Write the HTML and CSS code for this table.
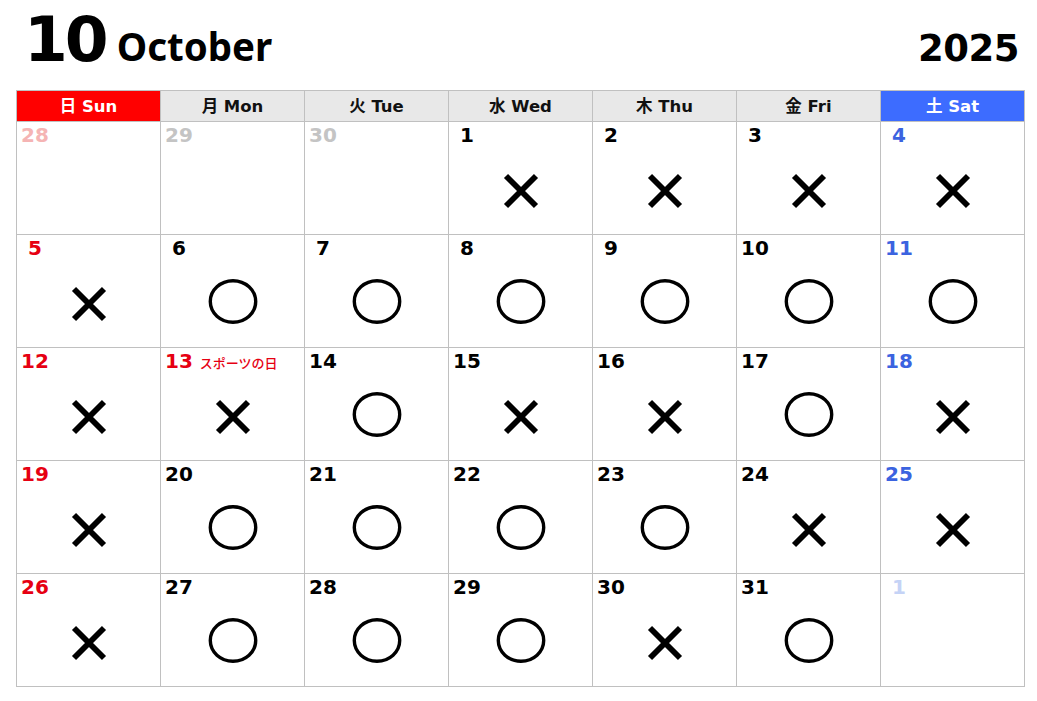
FILE: index.html
```html
<!DOCTYPE html>
<html lang="ja">
<head>
<meta charset="utf-8">
<title>October 2025</title>
<link rel="stylesheet" href="styles.css">
</head>
<body>
<div class="page">
  <div class="title">
    <span class="month-num">10</span>
    <span class="month-name">October</span>
    <span class="year">2025</span>
  </div>
  <div class="cal">
    <div class="hd sun">日 Sun</div>
    <div class="hd">月 Mon</div>
    <div class="hd">火 Tue</div>
    <div class="hd">水 Wed</div>
    <div class="hd">木 Thu</div>
    <div class="hd">金 Fri</div>
    <div class="hd sat">土 Sat</div>

    <div class="day"><div class="num prev-sun">28</div></div>
    <div class="day"><div class="num prev">29</div></div>
    <div class="day"><div class="num prev">30</div></div>
    <div class="day"><div class="num s">1</div><svg class="mark" viewBox="0 0 50 50"><path d="M10 10L40 40M40 10L10 40"/></svg></div>
    <div class="day"><div class="num s">2</div><svg class="mark" viewBox="0 0 50 50"><path d="M10 10L40 40M40 10L10 40"/></svg></div>
    <div class="day"><div class="num s">3</div><svg class="mark" viewBox="0 0 50 50"><path d="M10 10L40 40M40 10L10 40"/></svg></div>
    <div class="day"><div class="num s blue">4</div><svg class="mark" viewBox="0 0 50 50"><path d="M10 10L40 40M40 10L10 40"/></svg></div>

    <div class="day"><div class="num s red">5</div><svg class="mark" viewBox="0 0 50 50"><path d="M10 10L40 40M40 10L10 40"/></svg></div>
    <div class="day"><div class="num s">6</div><svg class="mark" viewBox="0 0 50 50"><ellipse cx="25" cy="22.5" rx="22.7" ry="20.7"/></svg></div>
    <div class="day"><div class="num s">7</div><svg class="mark" viewBox="0 0 50 50"><ellipse cx="25" cy="22.5" rx="22.7" ry="20.7"/></svg></div>
    <div class="day"><div class="num s">8</div><svg class="mark" viewBox="0 0 50 50"><ellipse cx="25" cy="22.5" rx="22.7" ry="20.7"/></svg></div>
    <div class="day"><div class="num s">9</div><svg class="mark" viewBox="0 0 50 50"><ellipse cx="25" cy="22.5" rx="22.7" ry="20.7"/></svg></div>
    <div class="day"><div class="num">10</div><svg class="mark" viewBox="0 0 50 50"><ellipse cx="25" cy="22.5" rx="22.7" ry="20.7"/></svg></div>
    <div class="day"><div class="num blue">11</div><svg class="mark" viewBox="0 0 50 50"><ellipse cx="25" cy="22.5" rx="22.7" ry="20.7"/></svg></div>

    <div class="day"><div class="num red">12</div><svg class="mark" viewBox="0 0 50 50"><path d="M10 10L40 40M40 10L10 40"/></svg></div>
    <div class="day"><div class="num red">13<span class="holiday">スポーツの日</span></div><svg class="mark" viewBox="0 0 50 50"><path d="M10 10L40 40M40 10L10 40"/></svg></div>
    <div class="day"><div class="num">14</div><svg class="mark" viewBox="0 0 50 50"><ellipse cx="25" cy="22.5" rx="22.7" ry="20.7"/></svg></div>
    <div class="day"><div class="num">15</div><svg class="mark" viewBox="0 0 50 50"><path d="M10 10L40 40M40 10L10 40"/></svg></div>
    <div class="day"><div class="num">16</div><svg class="mark" viewBox="0 0 50 50"><path d="M10 10L40 40M40 10L10 40"/></svg></div>
    <div class="day"><div class="num">17</div><svg class="mark" viewBox="0 0 50 50"><ellipse cx="25" cy="22.5" rx="22.7" ry="20.7"/></svg></div>
    <div class="day"><div class="num blue">18</div><svg class="mark" viewBox="0 0 50 50"><path d="M10 10L40 40M40 10L10 40"/></svg></div>

    <div class="day"><div class="num red">19</div><svg class="mark" viewBox="0 0 50 50"><path d="M10 10L40 40M40 10L10 40"/></svg></div>
    <div class="day"><div class="num">20</div><svg class="mark" viewBox="0 0 50 50"><ellipse cx="25" cy="22.5" rx="22.7" ry="20.7"/></svg></div>
    <div class="day"><div class="num">21</div><svg class="mark" viewBox="0 0 50 50"><ellipse cx="25" cy="22.5" rx="22.7" ry="20.7"/></svg></div>
    <div class="day"><div class="num">22</div><svg class="mark" viewBox="0 0 50 50"><ellipse cx="25" cy="22.5" rx="22.7" ry="20.7"/></svg></div>
    <div class="day"><div class="num">23</div><svg class="mark" viewBox="0 0 50 50"><ellipse cx="25" cy="22.5" rx="22.7" ry="20.7"/></svg></div>
    <div class="day"><div class="num">24</div><svg class="mark" viewBox="0 0 50 50"><path d="M10 10L40 40M40 10L10 40"/></svg></div>
    <div class="day"><div class="num blue">25</div><svg class="mark" viewBox="0 0 50 50"><path d="M10 10L40 40M40 10L10 40"/></svg></div>

    <div class="day"><div class="num red">26</div><svg class="mark" viewBox="0 0 50 50"><path d="M10 10L40 40M40 10L10 40"/></svg></div>
    <div class="day"><div class="num">27</div><svg class="mark" viewBox="0 0 50 50"><ellipse cx="25" cy="22.5" rx="22.7" ry="20.7"/></svg></div>
    <div class="day"><div class="num">28</div><svg class="mark" viewBox="0 0 50 50"><ellipse cx="25" cy="22.5" rx="22.7" ry="20.7"/></svg></div>
    <div class="day"><div class="num">29</div><svg class="mark" viewBox="0 0 50 50"><ellipse cx="25" cy="22.5" rx="22.7" ry="20.7"/></svg></div>
    <div class="day"><div class="num">30</div><svg class="mark" viewBox="0 0 50 50"><path d="M10 10L40 40M40 10L10 40"/></svg></div>
    <div class="day"><div class="num">31</div><svg class="mark" viewBox="0 0 50 50"><ellipse cx="25" cy="22.5" rx="22.7" ry="20.7"/></svg></div>
    <div class="day"><div class="num s next-sat">1</div></div>
  </div>
</div>
</body>
</html>
```
FILE: styles.css
```css
html, body {
  margin: 0;
  padding: 0;
  background: #ffffff;
}
.page {
  padding-left: 16px;
  width: 1009px;
}
.title {
  height: 90px;
  box-sizing: border-box;
  padding: 8px 6px 0 8px;
  display: flex;
  align-items: baseline;
  color: #000;
}
.month-num {
  font-family: "DejaVu Sans", sans-serif;
  font-weight: bold;
  font-size: 63px;
  line-height: 1;
  letter-spacing: -3px;
}
.month-name {
  font-family: "Noto Sans", "DejaVu Sans", sans-serif;
  font-weight: bold;
  font-size: 38.5px;
  line-height: 1;
  margin-left: 11px;
}
.year {
  margin-left: auto;
  font-family: "DejaVu Sans", sans-serif;
  font-weight: bold;
  font-size: 37px;
  line-height: 1;
  letter-spacing: -0.5px;
}
.cal {
  display: grid;
  grid-template-columns: repeat(7, 144px);
  border-left: 1px solid #c0c0c0;
  border-top: 1px solid #c0c0c0;
}
.cal > div {
  border-right: 1px solid #c0c0c0;
  border-bottom: 1px solid #c0c0c0;
  box-sizing: border-box;
}
.hd {
  height: 31px;
  padding-top: 2px;
  box-sizing: border-box;
  line-height: 28px;
  text-align: center;
  background: #e8e8e8;
  font-family: "DejaVu Sans", "Noto Sans CJK JP", sans-serif;
  font-weight: bold;
  font-size: 16.5px;
  color: #111;
}
.hd.sun {
  background: #ff0000;
  color: #fff;
}
.hd.sat {
  background: #3d6cff;
  color: #fff;
}
.day {
  height: 113px;
  display: flex;
  flex-direction: column;
  align-items: center;
}
.num {
  align-self: stretch;
  padding: 1px 0 0 4px;
  line-height: 24px;
  height: 25px;
  box-sizing: border-box;
  font-family: "DejaVu Sans", sans-serif;
  font-weight: bold;
  font-size: 20px;
  color: #000;
  white-space: nowrap;
}
.num.s {
  padding-left: 11px;
}
.num.red { color: #e60012; }
.num.blue { color: #3b63e0; }
.num.prev { color: #c4c4c4; }
.num.prev-sun { color: #f5b4b4; }
.num.next-sat { color: #c5d3f6; }
.holiday {
  font-family: "Noto Sans CJK JP", sans-serif;
  font-weight: 500;
  font-size: 13px;
  margin-left: 7px;
  color: #e60012;
}
.mark {
  width: 50px;
  height: 50px;
  margin-top: 19px;
  fill: none;
  stroke: #000;
}
.mark path {
  stroke-width: 5.8;
}
.mark ellipse {
  stroke-width: 3.4;
}
```
